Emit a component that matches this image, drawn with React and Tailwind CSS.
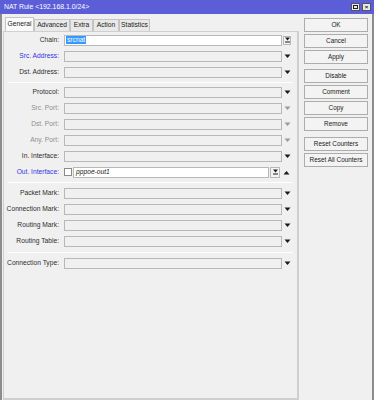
import React from 'react';

const DownArrow = ({ color = '#1a1a1a' }) => (
  <svg width="7" height="5" viewBox="0 0 7 5">
    <polygon points="0.5,0.5 6.5,0.5 3.5,4" fill={color} />
  </svg>
);

const UpArrow = () => (
  <svg width="7" height="5" viewBox="0 0 7 5">
    <polygon points="0.5,4.5 6.5,4.5 3.5,1" fill="#1a1a1a" />
  </svg>
);

const BoxIcon = () => (
  <svg width="5" height="6" viewBox="0 0 5 6">
    <polygon points="0,0.5 5,0.5 2.5,3.5" fill="#1a1a1a" />
    <rect x="0" y="4.5" width="5" height="1" fill="#1a1a1a" />
  </svg>
);

const Row = ({ label, color = 'text-[#2e2e2e]', arrow = '#1a1a1a' }) => (
  <div className="flex items-center h-[16px]">
    <div className={`w-[55px] text-right ${color}`}>{label}</div>
    <div className="ml-[5px] w-[218px] h-[11px] border border-[#b8b8b8] bg-[#f0f0f0]" />
    <div className="w-[10px] flex justify-center">
      <DownArrow color={arrow} />
    </div>
  </div>
);

const Sep = ({ h, top }) => (
  <div className={`${h} ${top} px-[4px]`}>
    <div className="h-px bg-[#dadada] border-b border-white" />
  </div>
);

const Btn = ({ children, className = '' }) => (
  <div className={`w-[64px] h-[14px] flex items-center justify-center border border-[#acacac] bg-[#f3f3f3] text-[#222] text-[6.4px] ${className}`}>
    {children}
  </div>
);

export default function App() {
  const tabs = [
    { name: 'General', w: 'w-[29px]', on: true },
    { name: 'Advanced', w: 'w-[36px]' },
    { name: 'Extra', w: 'w-[23px]' },
    { name: 'Action', w: 'w-[26px]' },
    { name: 'Statistics', w: 'w-[31px]' },
  ];

  return (
    <div className="w-[374px] h-[400px] bg-[#f0f0f0] flex flex-col overflow-hidden font-['Liberation_Sans',Arial,sans-serif] text-[6.7px] leading-none">
      {/* title bar */}
      <div className="h-[14px] bg-[#5b5ed6] flex items-center justify-between pl-[4px] pr-[3px]">
        <span className="text-white text-[6.9px]">NAT Rule &lt;192.168.1.0/24&gt;</span>
        <div className="flex gap-[2px]">
          <div className="w-[9px] h-[8px] bg-[#e8e8e8] border border-[#555] flex items-center justify-center">
            <div className="w-[5px] h-[4px] border border-[#222]" />
          </div>
          <div className="w-[9px] h-[8px] bg-[#e8e8e8] border border-[#555] flex items-center justify-center text-[6px] font-bold text-[#111]">
            ×
          </div>
        </div>
      </div>

      <div className="flex-1 flex border-l-2 border-r-2 border-[#8c8c8c] pl-px">
        {/* left side */}
        <div className="w-[296px] flex flex-col pt-[3px]">
          <div className="flex items-end h-[14px] pl-[2px]">
            {tabs.map((t) => (
              <div
                key={t.name}
                className={`${t.w} flex items-center justify-center border border-b-0 border-[#c4c4c4] text-[#222] ${
                  t.on ? 'h-[14px] bg-[#fafafa]' : 'h-[12px] bg-[#e9e9e9]'
                }`}
              >
                {t.name}
              </div>
            ))}
          </div>

          <div className="flex-1 border border-[#cfcfcf] border-r-2 border-b-2">
            {/* Chain */}
            <div className="flex items-center h-[16px]">
              <div className="w-[55px] text-right text-[#2e2e2e]">Chain:</div>
              <div className="ml-[5px] w-[218px] h-[11px] border border-[#b8b8b8] bg-white flex items-center pl-px">
                <span className="bg-[#3399ff] text-white px-px h-[8px] flex items-center">srcnat</span>
              </div>
              <div className="ml-px w-[8px] h-[9px] border border-[#b8b8b8] bg-[#f4f4f4] flex items-center justify-center">
                <BoxIcon />
              </div>
            </div>
            <Row label="Src. Address:" color="text-[#3434e6]" />
            <Row label="Dst. Address:" />
            <Sep h="h-[4px]" top="pt-[2px]" />
            <Row label="Protocol:" />
            <Row label="Src. Port:" color="text-[#8f8f8f]" arrow="#9a9a9a" />
            <Row label="Dst. Port:" color="text-[#8f8f8f]" arrow="#9a9a9a" />
            <Row label="Any. Port:" color="text-[#8f8f8f]" arrow="#9a9a9a" />
            <Row label="In. Interface:" />
            {/* Out interface */}
            <div className="flex items-center h-[16px]">
              <div className="w-[55px] text-right text-[#3434e6]">Out. Interface:</div>
              <div className="ml-[5px] w-[8px] h-[8px] border border-[#8a8a8a] bg-white" />
              <div className="ml-px w-[196px] h-[11px] border border-[#b8b8b8] bg-white flex items-center pl-[2px] italic text-[#222]">
                pppoe-out1
              </div>
              <div className="ml-px w-[10px] h-[11px] border border-[#b8b8b8] bg-[#f4f4f4] flex items-center justify-center">
                <BoxIcon />
              </div>
              <div className="w-[13px] flex justify-center">
                <UpArrow />
              </div>
            </div>
            <Sep h="h-[5px]" top="pt-[2px]" />
            <Row label="Packet Mark:" />
            <Row label="Connection Mark:" />
            <Row label="Routing Mark:" />
            <Row label="Routing Table:" />
            <Sep h="h-[6px]" top="pt-[3px]" />
            <Row label="Connection Type:" />
          </div>
        </div>

        {/* right side buttons */}
        <div className="pl-[5px] pt-[4px] flex flex-col">
          <div className="flex flex-col gap-[2px]">
            <Btn>OK</Btn>
            <Btn>Cancel</Btn>
            <Btn>Apply</Btn>
          </div>
          <div className="flex flex-col gap-[2px] mt-[5px]">
            <Btn>Disable</Btn>
            <Btn>Comment</Btn>
            <Btn>Copy</Btn>
            <Btn>Remove</Btn>
          </div>
          <div className="flex flex-col gap-[2px] mt-[6px]">
            <Btn>Reset Counters</Btn>
            <Btn>Reset All Counters</Btn>
          </div>
        </div>
      </div>
    </div>
  );
}
